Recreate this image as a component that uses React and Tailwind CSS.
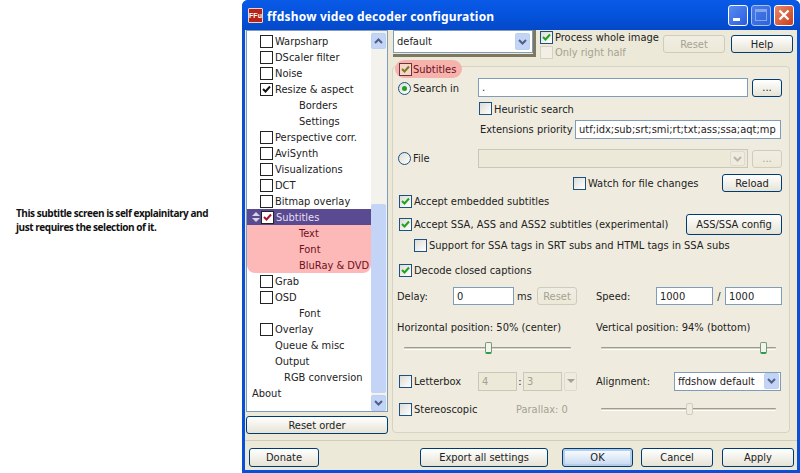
const treeRows = [
  { label: 'Warpsharp', box: true },
  { label: 'DScaler filter', box: true },
  { label: 'Noise', box: true },
  { label: 'Resize & aspect', box: true, checked: true },
  { label: 'Borders', indent: 'sub' },
  { label: 'Settings', indent: 'sub' },
  { label: 'Perspective corr.', box: true },
  { label: 'AviSynth', box: true },
  { label: 'Visualizations', box: true },
  { label: 'DCT', box: true },
  { label: 'Bitmap overlay', box: true },
  { label: 'Subtitles', box: true, checked: true, selected: true },
  { label: 'Text', indent: 'sub', pink: true },
  { label: 'Font', indent: 'sub', pink: true },
  { label: 'BluRay & DVD', indent: 'sub', pink: true, last: true },
  { label: 'Grab', box: true },
  { label: 'OSD', box: true },
  { label: 'Font', indent: 'sub' },
  { label: 'Overlay', box: true },
  { label: 'Queue & misc', indent: 'plain' },
  { label: 'Output', indent: 'plain' },
  { label: 'RGB conversion', indent: 'deep' },
  { label: 'About', indent: 'root' },
];

const indents = {
  sub: 'pl-[52px]',
  plain: 'pl-[28px]',
  deep: 'pl-[37px]',
  root: 'pl-[5px]',
};

function TreeRow({ row }) {
  if (row.selected) {
    return (
      <div className="flex h-4 items-center bg-[#5a4a92] pl-[5px] text-[#e6dff0]">
        <span className="flex w-[8px] flex-col items-center gap-[2px]">
          <span className="h-0 w-0 border-x-[4px] border-b-[4px] border-x-transparent border-b-[#d9d2e8]" />
          <span className="h-0 w-0 border-x-[4px] border-t-[4px] border-x-transparent border-t-[#d9d2e8]" />
        </span>
        <span className="ml-[1px] flex h-[13px] w-[13px] items-center justify-center border border-[#222] bg-white">
          <TickIcon color="#b01030" />
        </span>
        <span className="ml-[2px]">{row.label}</span>
      </div>
    );
  }
  if (row.box) {
    return (
      <div className="flex h-4 items-center pl-[13px] text-[#222]">
        <span className="flex h-[13px] w-[13px] items-center justify-center border border-[#222] bg-white">
          {row.checked && <TickIcon color="#111" />}
        </span>
        <span className="ml-[2px]">{row.label}</span>
      </div>
    );
  }
  return (
    <div
      className={`flex h-4 items-center whitespace-nowrap ${indents[row.indent]} ${
        row.pink ? 'bg-[#fdb8b8] text-[#6d1020]' : 'text-[#222]'
      } ${row.last ? 'rounded-b-[8px]' : ''}`}
    >
      {row.label}
    </div>
  );
}

function TickIcon({ color }) {
  return (
    <svg width="9" height="9" viewBox="0 0 9 9">
      <path d="M1 4 L3.5 6.5 L8 1.5" fill="none" stroke={color} strokeWidth="2" />
    </svg>
  );
}

function Check({ checked, disabled, dark }) {
  return (
    <span
      className={`flex h-[13px] w-[13px] shrink-0 items-center justify-center border ${
        disabled
          ? 'border-[#d5d2c2] bg-[#f2f0e6]'
          : dark
            ? 'border-[#6d3040] bg-[#f6d6c8]'
            : 'border-[#1c5180] bg-gradient-to-br from-[#dcdcd7] to-white'
      }`}
    >
      {checked && <TickIcon color={dark ? '#7c7c20' : '#21a121'} />}
    </span>
  );
}

function Radio({ checked }) {
  return (
    <span className="flex h-[13px] w-[13px] shrink-0 items-center justify-center rounded-full border border-[#1c5180] bg-gradient-to-br from-[#dcdcd7] to-white">
      {checked && <span className="h-[5px] w-[5px] rounded-full bg-[#21a121]" />}
    </span>
  );
}

function Btn({ children, className = '', disabled, primary }) {
  return (
    <button
      className={`flex shrink-0 items-center justify-center rounded-[3px] border bg-gradient-to-b ${
        disabled
          ? 'border-[#cfccbd] from-[#f0eee3] to-[#ece9d8] text-[#a5a290]'
          : primary
            ? 'border-[#003c74] from-white to-[#c4d8f0] text-[#222] shadow-[inset_0_0_0_2px_#b6cdea]'
            : 'border-[#003c74] from-white to-[#e6e3d6] text-[#222]'
      } ${className}`}
    >
      {children}
    </button>
  );
}

function Input({ children, className = '', disabled }) {
  return (
    <div
      className={`flex shrink-0 items-center overflow-hidden whitespace-nowrap border px-[3px] ${
        disabled ? 'border-[#c9c7ba] bg-[#ece9d8] text-[#a5a290]' : 'border-[#7f9db9] bg-white text-[#222]'
      } ${className}`}
    >
      {children}
    </div>
  );
}

function ArrowBtn({ up, disabled, solid, className = '' }) {
  return (
    <span
      className={`flex shrink-0 items-center justify-center rounded-[2px] border ${
        disabled ? 'border-[#dedbcd] bg-[#efecdf]' : 'border-[#bcd0f0] bg-[#c4d4f6]'
      } ${className}`}
    >
      {solid ? (
        <span className="h-0 w-0 border-x-[4px] border-t-[4px] border-x-transparent border-t-[#a5a290]" />
      ) : (
        <svg width="9" height="6" viewBox="0 0 9 6">
          <path
            d={up ? 'M1 5 L4.5 1.5 L8 5' : 'M1 1 L4.5 4.5 L8 1'}
            fill="none"
            stroke={disabled ? '#b9b7a8' : '#4d6185'}
            strokeWidth="2"
          />
        </svg>
      )}
    </span>
  );
}

function Slider({ thumb, className = '', disabled }) {
  return (
    <div className={`relative flex h-[18px] items-center ${className}`}>
      <div className="h-[3px] w-full rounded-[1px] border-y border-t-[#9d9c90] border-b-white bg-[#d6d3c4]" />
      <span
        className={`absolute top-[3px] h-[12px] w-[7px] rounded-[2px] border ${
          disabled ? 'border-[#cfccbd] bg-[#efece0]' : 'border-[#6f9c7a] border-b-[#2f9a4a] border-b-2 bg-[#f4f4ec]'
        }`}
        style={{ left: thumb }}
      />
    </div>
  );
}

export default function App() {
  return (
    <div className="flex h-[473px] w-[800px] bg-white font-['DejaVu_Sans_Condensed','Liberation_Sans',sans-serif] text-[11px] leading-[15px]">
      <div className="flex w-[242px] shrink-0 items-center pb-[33px] pl-[16px]">
        <p className="w-[220px] font-['Open_Sans',sans-serif] text-[10px] leading-[14px] font-bold tracking-[-0.46px] whitespace-nowrap text-[#111]">
          This subtitle screen is self explainitary and
          <br />
          just requires the selection of it.
        </p>
      </div>

      <div className="flex w-[558px] flex-col rounded-t-[6px] bg-[#0a4fd8]">
        {/* title bar */}
        <div className="flex h-[30px] shrink-0 items-center rounded-t-[6px] bg-gradient-to-b from-[#0a5ae8] via-[#0553dc] to-[#0448c8] pr-[6px] pl-[6px]">
          <span className="flex h-[15px] w-[15px] items-center justify-center rounded-[1px] border border-[#f4d0c0] bg-[#b5261a] font-['Liberation_Sans',sans-serif] text-[7px] leading-none font-bold text-white">
            FFu
          </span>
          <span className="ml-[4px] pt-[2px] font-['Noto_Sans',sans-serif] text-[12px] font-bold tracking-[0.2px] whitespace-nowrap text-white">
            ffdshow video decoder configuration
          </span>
          <div className="ml-auto flex items-center gap-[3px]">
            <span className="flex h-[21px] w-[20px] items-end rounded-[3px] border border-white bg-gradient-to-br from-[#5a8cf0] to-[#2a5ce0] pb-[4px] pl-[4px]">
              <span className="h-[3px] w-[7px] bg-white" />
            </span>
            <span className="flex h-[21px] w-[20px] items-center justify-center rounded-[3px] border border-[#a8c0f0] bg-gradient-to-br from-[#4a7ce8] to-[#2e62dc]">
              <span className="h-[12px] w-[12px] border border-t-[3px] border-[#86a6ea]" />
            </span>
            <span className="flex h-[21px] w-[20px] items-center justify-center rounded-[3px] border border-white bg-gradient-to-br from-[#e88868] to-[#c83a18]">
              <svg width="12" height="12" viewBox="0 0 12 12">
                <path d="M1.5 1.5 L10.5 10.5 M10.5 1.5 L1.5 10.5" stroke="#fff" strokeWidth="2.4" />
              </svg>
            </span>
          </div>
        </div>

        {/* client area */}
        <div className="mx-[3px] mb-[3px] flex flex-1 flex-col bg-[#ece9d8]">
          <div className="flex flex-1">
            {/* tree */}
            <div className="flex w-[147px] shrink-0 flex-col pl-[1px]">
              <div className="flex h-[382px] w-[142px] border border-[#7f9db9] bg-white">
                <div className="w-[124px] pt-[2px]">
                  {treeRows.map((row, i) => (
                    <TreeRow key={i} row={row} />
                  ))}
                </div>
                <div className="flex w-[16px] flex-col bg-[#f3f2ec] pt-[2px]">
                  <ArrowBtn up className="h-[16px] w-[15px]" />
                  <div className="mt-[155px] h-[190px] w-[15px] rounded-[2px] bg-[#c4d4f6]" />
                  <ArrowBtn className="mt-[2px] h-[16px] w-[15px]" />
                </div>
              </div>
              <Btn className="mt-[4px] h-[18px] w-[142px]">Reset order</Btn>
            </div>

            {/* settings */}
            <div className="flex flex-1 flex-col">
              <div className="flex h-[36px] shrink-0 items-start">
                <div className="ml-[1px] flex h-[27px] w-[143px] border-r-[3px] border-b-[3px] border-[#7d785f]">
                  <Input className="h-[23px] w-[140px] justify-between pr-[2px]">
                    default
                    <ArrowBtn className="h-[17px] w-[15px]" />
                  </Input>
                </div>
                <div className="ml-[4px] flex w-[123px] flex-col whitespace-nowrap">
                  <div className="flex h-[15px] items-center gap-[2px] text-[#222]">
                    <Check checked />
                    Process whole image
                  </div>
                  <div className="flex h-[15px] items-center gap-[2px] text-[#a5a290]">
                    <Check disabled />
                    Only right half
                  </div>
                </div>
                <Btn disabled className="mt-[5px] h-[18px] w-[62px]">
                  Reset
                </Btn>
                <Btn className="mt-[5px] ml-[6px] h-[18px] w-[62px]">Help</Btn>
              </div>

              <div className="h-[367px] w-[398px] rounded-[4px] border border-[#d6d3c2] bg-[#efecdf] pl-[5px]">
                <div className="-mt-[7px] text-[#222]">
                  <div className="flex h-[18px] items-center">
                    <span className="-ml-[3px] flex h-[18px] items-center gap-[1px] rounded-full bg-[#f6b3ac] pr-[6px] pl-[4px] text-[#6d1020]">
                      <Check checked dark />
                      Subtitles
                    </span>
                  </div>
                  <div className="flex h-[19px] items-center">
                    <span className="mt-[1px] flex items-center">
                      <Radio checked />
                      <span className="ml-[2px] w-[65px]">Search in</span>
                    </span>
                    <Input className="h-[19px] w-[270px]">.</Input>
                    <Btn className="ml-[4px] h-[18px] w-[30px]">...</Btn>
                  </div>
                  <div className="flex h-[23px] items-center pl-[81px]">
                    <Check />
                    <span className="ml-[2px] pt-[1px]">Heuristic search</span>
                  </div>
                  <div className="flex h-[19px] items-center pl-[82px]">
                    <span className="w-[95px] whitespace-nowrap">Extensions priority</span>
                    <Input className="h-[19px] w-[206px]">utf;idx;sub;srt;smi;rt;txt;ass;ssa;aqt;mp</Input>
                  </div>
                  <div className="mt-[10px] flex h-[19px] items-center">
                    <Radio />
                    <span className="ml-[2px] w-[65px]">File</span>
                    <Input disabled className="h-[19px] w-[270px] justify-end pr-[2px]">
                      <ArrowBtn disabled className="h-[15px] w-[15px]" />
                    </Input>
                    <Btn disabled className="ml-[4px] h-[18px] w-[30px]">
                      ...
                    </Btn>
                  </div>
                  <div className="mt-[6px] flex h-[18px] items-center pl-[175px]">
                    <Check />
                    <span className="ml-[2px] w-[134px] whitespace-nowrap">Watch for file changes</span>
                    <Btn className="h-[18px] w-[60px]">Reload</Btn>
                  </div>
                  <div className="flex h-[18px] items-center pl-[1px]">
                    <Check checked />
                    <span className="ml-[2px]">Accept embedded subtitles</span>
                  </div>
                  <div className="flex h-[28px] items-center pl-[1px]">
                    <Check checked />
                    <span className="ml-[2px] w-[272px] whitespace-nowrap">
                      Accept SSA, ASS and ASS2 subtitles (experimental)
                    </span>
                    <Btn className="h-[21px] w-[96px]">ASS/SSA config</Btn>
                  </div>
                  <div className="flex h-[14px] items-center pl-[16px]">
                    <Check />
                    <span className="ml-[2px] whitespace-nowrap">
                      Support for SSA tags in SRT subs and HTML tags in SSA subs
                    </span>
                  </div>
                  <div className="mt-[9px] flex h-[18px] items-center pl-[1px]">
                    <Check checked />
                    <span className="ml-[2px]">Decode closed captions</span>
                  </div>
                  <div className="mt-[8px] -ml-[1px] flex h-[18px] items-center">
                    <span className="w-[56px]">Delay:</span>
                    <Input className="h-[18px] w-[61px]">0</Input>
                    <span className="ml-[3px] w-[20px]">ms</span>
                    <Btn disabled className="h-[18px] w-[40px]">
                      Reset
                    </Btn>
                    <span className="ml-[19px] w-[60px]">Speed:</span>
                    <Input className="h-[18px] w-[57px]">1000</Input>
                    <span className="w-[12px] text-center">/</span>
                    <Input className="h-[18px] w-[57px]">1000</Input>
                  </div>
                  <div className="mt-[13px] -ml-[1px] flex h-[18px] items-center whitespace-nowrap">
                    <span className="w-[199px]">Horizontal position: 50% (center)</span>
                    <span>Vertical position: 94% (bottom)</span>
                  </div>
                  <div className="mt-[3px] flex">
                    <Slider thumb="81px" className="ml-[6px] w-[167px]" />
                    <Slider thumb="159px" className="ml-[30px] w-[175px]" />
                  </div>
                  <div className="mt-[14px] flex h-[20px] items-center pl-[1px]">
                    <Check />
                    <span className="ml-[2px] w-[64px]">Letterbox</span>
                    <Input disabled className="h-[19px] w-[39px]">
                      4
                    </Input>
                    <span className="w-[6px] text-center">:</span>
                    <Input disabled className="h-[19px] w-[39px]">
                      3
                    </Input>
                    <ArrowBtn disabled solid className="ml-[2px] h-[19px] w-[13px]" />
                    <span className="ml-[19px] w-[78px]">Alignment:</span>
                    <Input className="h-[19px] w-[107px] justify-between pr-[1px]">
                      ffdshow default
                      <ArrowBtn className="h-[16px] w-[15px]" />
                    </Input>
                  </div>
                  <div className="mt-[8px] flex h-[20px] items-center pl-[1px]">
                    <Check />
                    <span className="ml-[2px] w-[102px]">Stereoscopic</span>
                    <span className="w-[85px] text-[#a5a290]">Parallax: 0</span>
                    <Slider disabled thumb="85px" className="w-[175px]" />
                  </div>
                </div>
              </div>
            </div>
          </div>

          {/* footer */}
          <div className="flex h-[30px] shrink-0 items-center border-t border-[#d0cdbc] pt-[4px] pr-[2px] pl-[4px]">
            <Btn className="h-[19px] w-[70px]">Donate</Btn>
            <Btn className="ml-[101px] h-[19px] w-[128px]">Export all settings</Btn>
            <Btn primary className="ml-[14px] h-[19px] w-[71px]">
              OK
            </Btn>
            <Btn className="ml-[8px] h-[19px] w-[72px]">Cancel</Btn>
            <Btn className="ml-[9px] h-[19px] w-[72px]">Apply</Btn>
          </div>
        </div>
      </div>
    </div>
  );
}
